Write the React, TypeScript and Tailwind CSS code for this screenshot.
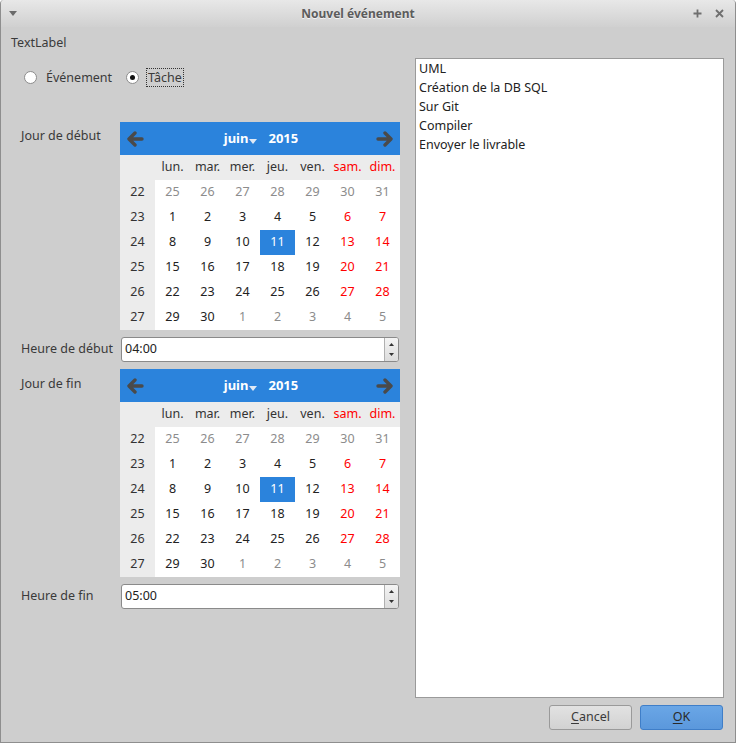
import React from 'react';

type Cell = { d: number; muted?: boolean };

const weeks: { wk: number; days: Cell[] }[] = [
  { wk: 22, days: [25, 26, 27, 28, 29, 30, 31].map((d) => ({ d, muted: true })) },
  { wk: 23, days: [1, 2, 3, 4, 5, 6, 7].map((d) => ({ d })) },
  { wk: 24, days: [8, 9, 10, 11, 12, 13, 14].map((d) => ({ d })) },
  { wk: 25, days: [15, 16, 17, 18, 19, 20, 21].map((d) => ({ d })) },
  { wk: 26, days: [22, 23, 24, 25, 26, 27, 28].map((d) => ({ d })) },
  { wk: 27, days: [29, 30].map((d) => ({ d })).concat([1, 2, 3, 4, 5].map((d) => ({ d, muted: true }))) },
];

const dayNames = ['lun.', 'mar.', 'mer.', 'jeu.', 'ven.', 'sam.', 'dim.'];

function Arrow({ dir }: { dir: 'left' | 'right' }) {
  return (
    <svg width="18" height="16" viewBox="0 0 18 16" className={dir === 'right' ? 'rotate-180' : ''}>
      <path d="M9 2 L3 8 L9 14 M3.5 8 H16" fill="none" stroke="#4a4a4a" strokeWidth="3.4" strokeLinecap="round" strokeLinejoin="round" />
    </svg>
  );
}

function Calendar() {
  return (
    <div className="w-[280px] bg-white">
      {/* entête bleue */}
      <div className="h-[33px] bg-[#2b83dc] flex items-center justify-between px-[6px]">
        <Arrow dir="left" />
        <div className="flex items-center text-white font-bold text-[13px] pl-[2px]">
          <span>juin</span>
          <svg width="10" height="8" viewBox="0 0 10 8" className="mt-[5px] mr-[10px]">
            <path d="M1 2 L9 2 L5 7 Z" fill="#dfe9f5" />
          </svg>
          <span>2015</span>
        </div>
        <Arrow dir="right" />
      </div>
      <div className="grid grid-cols-8">
        <div className="h-[25px] bg-[#ececec]" />
        {dayNames.map((n, i) => (
          <div key={n} className={`h-[25px] bg-[#ececec] flex items-center justify-center ${i >= 5 ? 'text-[#f00]' : 'text-[#333]'}`}>
            {n}
          </div>
        ))}
        {weeks.map((w) => (
          <React.Fragment key={w.wk}>
            <div className="h-[25px] bg-[#ececec] flex items-center justify-center text-[#333]">{w.wk}</div>
            {w.days.map((c, i) => {
              const sel = !c.muted && c.d === 11;
              const color = sel
                ? 'bg-[#2b83dc] text-white'
                : c.muted
                ? 'text-[#8c8c8c]'
                : i >= 5
                ? 'text-[#f00]'
                : 'text-[#222]';
              return (
                <div key={i} className={`h-[25px] flex items-center justify-center ${color}`}>
                  {c.d}
                </div>
              );
            })}
          </React.Fragment>
        ))}
      </div>
    </div>
  );
}

function SpinBox({ value }: { value: string }) {
  return (
    <div className="w-[278px] h-[25px] ml-[1px] flex bg-white border border-[#8a8a8a] rounded-[3px] overflow-hidden">
      <div className="flex-1 flex items-center pl-[3px] text-[#222]">{value}</div>
      <div className="w-[14px] border-l border-[#b0b0b0] bg-gradient-to-b from-[#f4f4f4] to-[#dcdcdc] flex flex-col items-center justify-center gap-[7px]">
        <svg width="5" height="3" viewBox="0 0 5 3"><path d="M0 3 L2.5 0 L5 3 Z" fill="#333" /></svg>
        <svg width="5" height="3" viewBox="0 0 5 3"><path d="M0 0 L2.5 3 L5 0 Z" fill="#333" /></svg>
      </div>
    </div>
  );
}

function Radio({ checked, label, focus }: { checked?: boolean; label: string; focus?: boolean }) {
  return (
    <div className="flex items-center">
      <div className="w-[13px] h-[13px] rounded-full bg-white border border-[#8c8c8c] flex items-center justify-center">
        {checked && <div className="w-[5px] h-[5px] rounded-full bg-[#111]" />}
      </div>
      <span className={`ml-[8px] px-[1px] leading-[17px] ${focus ? 'outline-1 outline-dotted outline-[#333]' : ''}`}>{label}</span>
    </div>
  );
}

export default function App() {
  const tasks = ['UML', 'Création de la DB SQL', 'Sur Git', 'Compiler', 'Envoyer le livrable'];

  return (
    <div className="w-[736px] h-[743px] flex flex-col bg-[#cecece] border-x border-b border-[#8e8e8e] rounded-t-[4px] overflow-hidden text-[12.5px] text-[#3a3a3a]" style={{ fontFamily: '"Noto Sans", "Open Sans", sans-serif' }}>
      {/* barre de titre */}
      <div className="h-[27px] shrink-0 flex items-center bg-gradient-to-b from-[#e8e8e8] to-[#d0d0d0] px-[8px]">
        <svg width="8" height="6" viewBox="0 0 8 6"><path d="M0 0 L8 0 L4 5 Z" fill="#6a6a6a" /></svg>
        <div className="flex-1 text-center font-bold text-[12px] text-[#5c5c5c] pl-[6px]" style={{ textShadow: '0 1px 0 #f4f4f4' }}>
          Nouvel événement
        </div>
        <div className="flex items-center gap-[13px] pr-[3px]">
          <svg width="9" height="9" viewBox="0 0 9 9"><path d="M4.5 0.5 V8.5 M0.5 4.5 H8.5" stroke="#6f6f6f" strokeWidth="1.8" /></svg>
          <svg width="9" height="9" viewBox="0 0 9 9"><path d="M1 1 L8 8 M8 1 L1 8" stroke="#6f6f6f" strokeWidth="1.8" /></svg>
        </div>
      </div>

      <div className="flex-1 flex flex-col pl-[10px] pr-[11px]">
        <div className="h-[31px] flex items-center pt-[1px]">TextLabel</div>

        <div className="flex-1 flex">
          {/* colonne gauche */}
          <div className="w-[389px] flex flex-col">
            <div className="flex items-center gap-[13px] pl-[13px] h-[38px]">
              <Radio label="Événement" />
              <Radio label="Tâche" checked focus />
            </div>

            <div className="mt-[26px] grid grid-cols-[109px_280px] gap-y-[7px]">
              <div className="pl-[10px] pt-[5px]">Jour de début</div>
              <Calendar />
              <div className="pl-[10px] flex items-center">Heure de début</div>
              <SpinBox value="04:00" />
              <div className="pl-[10px] pt-[6px]">Jour de fin</div>
              <Calendar />
              <div className="pl-[10px] flex items-center">Heure de fin</div>
              <SpinBox value="05:00" />
            </div>
          </div>

          {/* liste des tâches */}
          <div className="ml-[15px] flex-1 flex flex-col">
            <div className="h-[640px] bg-white border border-[#9a9a9a] pl-[3px]">
              {tasks.map((t) => (
                <div key={t} className="h-[19px] leading-[19px] text-[#222]">
                  {t}
                </div>
              ))}
            </div>
          </div>
        </div>

        <div className="h-[44px] shrink-0 flex items-start justify-end gap-[8px] pt-[7px] pr-[1px]">
          <button className="w-[83px] h-[25px] rounded-[3px] border border-[#9a9a9a] bg-gradient-to-b from-[#e2e2e2] to-[#d2d2d2] text-[#3a3a3a]">
            <span className="underline underline-offset-2">C</span>ancel
          </button>
          <button className="w-[83px] h-[25px] rounded-[3px] border border-[#3f7ec8] bg-gradient-to-b from-[#6aa6e6] to-[#5b98dc] text-[#2a2a2a]">
            <span className="underline underline-offset-2">O</span>K
          </button>
        </div>
      </div>
    </div>
  );
}
